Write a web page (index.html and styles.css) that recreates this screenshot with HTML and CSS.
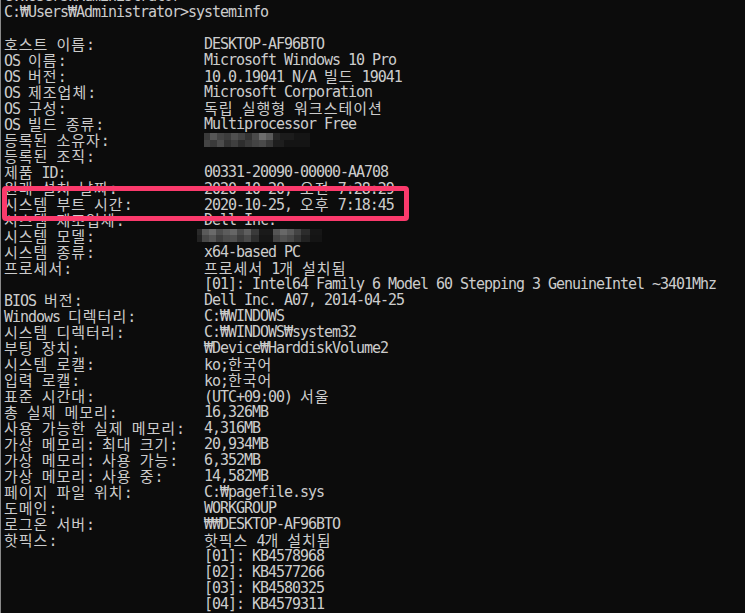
FILE: index.html
```html
<!DOCTYPE html>
<html lang="ko">
<head>
<meta charset="utf-8">
<title>systeminfo</title>
<link rel="stylesheet" href="styles.css">
</head>
<body>
<div class="screen">
  <div class="term">
    <div class="row">C:₩Users₩Administrator&gt;</div>
    <div class="row">C:₩Users₩Administrator&gt;systeminfo</div>
    <div class="row"></div>
    <div class="row"><span class="lbl"><span class="k">호스트</span> <span class="k">이름</span>:</span><span class="val">DESKTOP-AF96BTO</span></div>
    <div class="row"><span class="lbl">OS <span class="k">이름</span>:</span><span class="val">Microsoft Windows 10 Pro</span></div>
    <div class="row"><span class="lbl">OS <span class="k">버전</span>:</span><span class="val">10.0.19041 N/A <span class="k">빌드</span> 19041</span></div>
    <div class="row"><span class="lbl">OS <span class="k">제조업체</span>:</span><span class="val">Microsoft Corporation</span></div>
    <div class="row"><span class="lbl">OS <span class="k">구성</span>:</span><span class="val"><span class="k">독립</span> <span class="k">실행형</span> <span class="k">워크스테이션</span></span></div>
    <div class="row"><span class="lbl">OS <span class="k">빌드</span> <span class="k">종류</span>:</span><span class="val">Multiprocessor Free</span></div>
    <div class="row"><span class="lbl"><span class="k">등록된</span> <span class="k">소유자</span>:</span><span class="val"><span class="blur blur-owner"></span></span></div>
    <div class="row"><span class="lbl"><span class="k">등록된</span> <span class="k">조직</span>:</span><span class="val"></span></div>
    <div class="row"><span class="lbl"><span class="k">제품</span> ID:</span><span class="val">00331-20090-00000-AA708</span></div>
    <div class="row"><span class="lbl"><span class="k">원래</span> <span class="k">설치</span> <span class="k">날짜</span>:</span><span class="val">2020-10-20, <span class="k">오전</span> 7:28:29</span></div>
    <div class="row"><span class="lbl"><span class="k">시스템</span> <span class="k">부트</span> <span class="k">시간</span>:</span><span class="val">2020-10-25, <span class="k">오후</span> 7:18:45</span></div>
    <div class="row"><span class="lbl"><span class="k">시스템</span> <span class="k">제조업체</span>:</span><span class="val">Dell Inc.</span></div>
    <div class="row"><span class="lbl"><span class="k">시스템</span> <span class="k">모델</span>:</span><span class="val val-shift"><span class="blur blur-model"></span></span></div>
    <div class="row"><span class="lbl"><span class="k">시스템</span> <span class="k">종류</span>:</span><span class="val">x64-based PC</span></div>
    <div class="row"><span class="lbl"><span class="k">프로세서</span>:</span><span class="val"><span class="k">프로세서</span> 1<span class="k">개</span> <span class="k">설치됨</span></span></div>
    <div class="row"><span class="lbl"></span><span class="val">[01]: Intel64 Family 6 Model 60 Stepping 3 GenuineIntel ~3401Mhz</span></div>
    <div class="row"><span class="lbl">BIOS <span class="k">버전</span>:</span><span class="val">Dell Inc. A07, 2014-04-25</span></div>
    <div class="row"><span class="lbl">Windows <span class="k">디렉터리</span>:</span><span class="val">C:₩WINDOWS</span></div>
    <div class="row"><span class="lbl"><span class="k">시스템</span> <span class="k">디렉터리</span>:</span><span class="val">C:₩WINDOWS₩system32</span></div>
    <div class="row"><span class="lbl"><span class="k">부팅</span> <span class="k">장치</span>:</span><span class="val">₩Device₩HarddiskVolume2</span></div>
    <div class="row"><span class="lbl"><span class="k">시스템</span> <span class="k">로캘</span>:</span><span class="val">ko;<span class="k">한국어</span></span></div>
    <div class="row"><span class="lbl"><span class="k">입력</span> <span class="k">로캘</span>:</span><span class="val">ko;<span class="k">한국어</span></span></div>
    <div class="row"><span class="lbl"><span class="k">표준</span> <span class="k">시간대</span>:</span><span class="val">(UTC+09:00) <span class="k">서울</span></span></div>
    <div class="row"><span class="lbl"><span class="k">총</span> <span class="k">실제</span> <span class="k">메모리</span>:</span><span class="val">16,326MB</span></div>
    <div class="row"><span class="lbl"><span class="k">사용</span> <span class="k">가능한</span> <span class="k">실제</span> <span class="k">메모리</span>:</span><span class="val">4,316MB</span></div>
    <div class="row"><span class="lbl"><span class="k">가상</span> <span class="k">메모리</span>: <span class="k">최대</span> <span class="k">크기</span>:</span><span class="val">20,934MB</span></div>
    <div class="row"><span class="lbl"><span class="k">가상</span> <span class="k">메모리</span>: <span class="k">사용</span> <span class="k">가능</span>:</span><span class="val">6,352MB</span></div>
    <div class="row"><span class="lbl"><span class="k">가상</span> <span class="k">메모리</span>: <span class="k">사용</span> <span class="k">중</span>:</span><span class="val">14,582MB</span></div>
    <div class="row"><span class="lbl"><span class="k">페이지</span> <span class="k">파일</span> <span class="k">위치</span>:</span><span class="val">C:₩pagefile.sys</span></div>
    <div class="row"><span class="lbl"><span class="k">도메인</span>:</span><span class="val">WORKGROUP</span></div>
    <div class="row"><span class="lbl"><span class="k">로그온</span> <span class="k">서버</span>:</span><span class="val">₩₩DESKTOP-AF96BTO</span></div>
    <div class="row"><span class="lbl"><span class="k">핫픽스</span>:</span><span class="val"><span class="k">핫픽스</span> 4<span class="k">개</span> <span class="k">설치됨</span></span></div>
    <div class="row"><span class="lbl"></span><span class="val">[01]: KB4578968</span></div>
    <div class="row"><span class="lbl"></span><span class="val">[02]: KB4577266</span></div>
    <div class="row"><span class="lbl"></span><span class="val">[03]: KB4580325</span></div>
    <div class="row"><span class="lbl"></span><span class="val">[04]: KB4579311</span></div>
    <div class="row"><span class="lbl"><span class="k">네트워크</span> <span class="k">카드</span>:</span><span class="val">1<span class="k">개</span> NIC<span class="k">이</span>(<span class="k">가</span>) <span class="k">설치되었습니다</span>.</span></div>
  </div>
  <div class="highlight"></div>
</div>
</body>
</html>
```

FILE: styles.css
```css
html, body {
  margin: 0;
  padding: 0;
  background: #0c0c0c;
}

.screen {
  position: relative;
  width: 745px;
  height: 613px;
  overflow: hidden;
  background: #0c0c0c;
  border-left: 1px solid #8a8a8a;
  box-sizing: border-box;
}

.term {
  margin-top: -12px;
  padding-left: 3px;
  color: #cccccc;
  font-family: "DejaVu Sans Mono", "Noto Sans CJK KR", monospace;
  font-size: 15px;
  letter-spacing: -1.03px;
  display: flex;
  flex-direction: column;
}

.row {
  height: 16px;
  line-height: 16px;
  white-space: pre;
  display: flex;
}

.lbl {
  flex: none;
  width: 200px;
}

.val {
  flex: none;
}

.k {
  font-family: "Noto Sans CJK KR", sans-serif;
  letter-spacing: 1px;
}

.blur {
  display: inline-block;
  vertical-align: top;
}

.blur-owner {
  width: 106px;
  height: 14px;
  margin-top: 1px;
  background:
    linear-gradient(90deg,
      #3a3a3a 0 6px, #565656 6px 13px, #444 13px 20px, #3c3c3c 20px 27px,
      #4f4f4f 27px 34px, #434343 34px 41px, #333 41px 48px, #4a4a4a 48px 55px,
      #6c6c6c 55px 62px, #5a5a5a 62px 69px, #262626 69px 76px, #1c1c1c 76px 90px,
      #151515 90px 106px) top / 100% 7px no-repeat,
    linear-gradient(90deg,
      #444 0 6px, #3a3a3a 6px 13px, #4c4c4c 13px 20px, #333 20px 27px,
      #3f3f3f 27px 34px, #2e2e2e 34px 41px, #3a3a3a 41px 48px, #444 48px 55px,
      #4a4a4a 55px 62px, #383838 62px 69px, #1e1e1e 69px 80px, #141414 80px 106px) bottom / 100% 7px no-repeat;
}

.val-shift {
  margin-left: -7px;
}

.blur-model {
  width: 125px;
  height: 13px;
  margin-top: 1px;
  background:
    linear-gradient(90deg,
      #2a2a2a 0 5px, #5a5a5a 5px 12px, #6a6a6a 12px 19px, #4e4e4e 19px 26px,
      #5c5c5c 26px 33px, #666 33px 40px, #4a4a4a 40px 47px, #5e5e5e 47px 54px,
      #3a3a3a 54px 62px, #1a1a1a 62px 76px, #555 76px 83px, #686868 83px 90px,
      #5a5a5a 90px 97px, #444 97px 104px, #2c2c2c 104px 113px, #161616 113px 125px) top / 100% 6px no-repeat,
    linear-gradient(90deg,
      #222 0 5px, #484848 5px 12px, #555 12px 19px, #3e3e3e 19px 26px,
      #4c4c4c 26px 33px, #505050 33px 40px, #3c3c3c 40px 47px, #4a4a4a 47px 54px,
      #2e2e2e 54px 62px, #161616 62px 76px, #444 76px 83px, #525252 83px 90px,
      #484848 90px 97px, #363636 97px 104px, #222 104px 113px, #141414 113px 125px) bottom / 100% 7px no-repeat;
}

.highlight {
  position: absolute;
  left: 1px;
  top: 186px;
  width: 407px;
  height: 35px;
  box-sizing: border-box;
  border: 5px solid #fb3a6c;
  border-radius: 4px;
}
```
